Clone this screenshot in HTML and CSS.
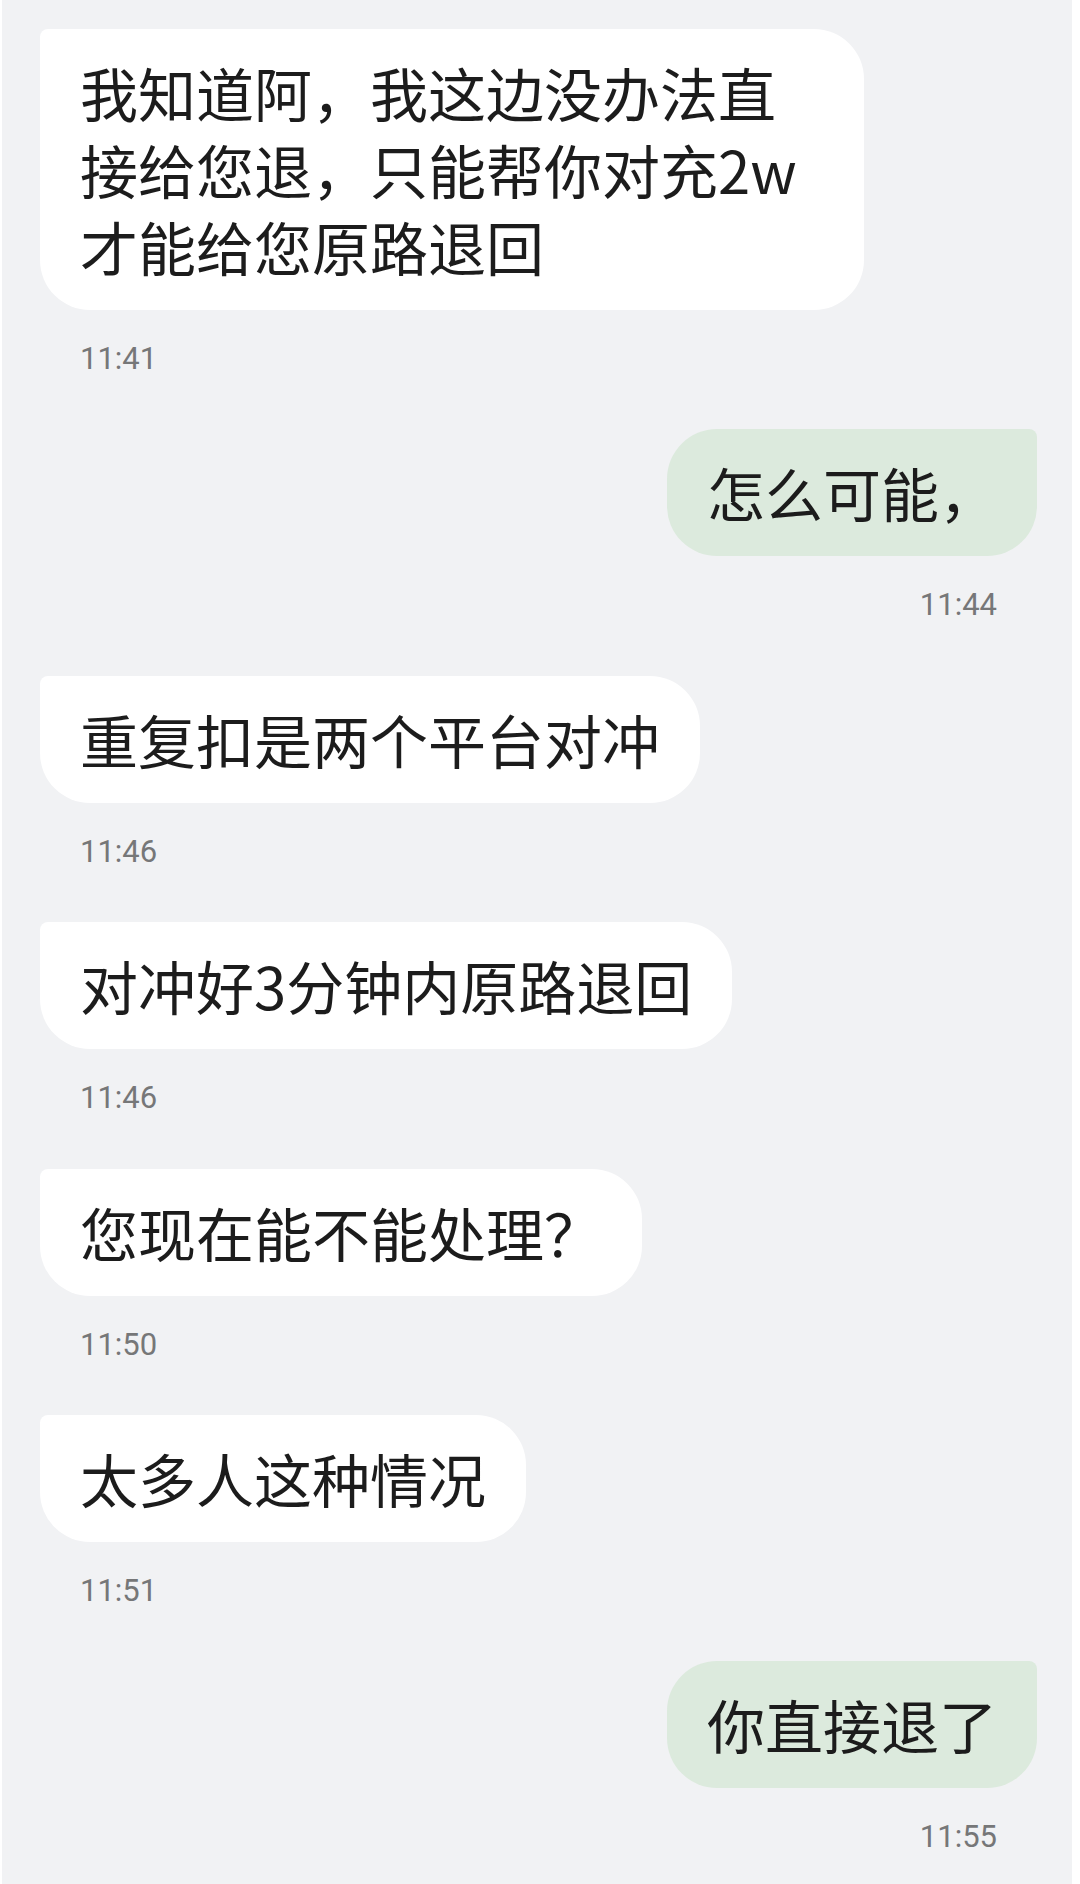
FILE: index.html
```html
<!DOCTYPE html>
<html lang="zh-CN">
<head>
<meta charset="utf-8">
<title>聊天记录</title>
<link rel="stylesheet" href="styles.css">
</head>
<body>
<div class="chat">
  <div class="msg in">
    <div class="bubble">我知道阿，我这边没办法直接给您退，只能帮你对充2w<br>才能给您原路退回</div>
    <div class="time">11:41</div>
  </div>
  <div class="msg out">
    <div class="bubble">怎么可能，</div>
    <div class="time">11:44</div>
  </div>
  <div class="msg in">
    <div class="bubble">重复扣是两个平台对冲</div>
    <div class="time">11:46</div>
  </div>
  <div class="msg in">
    <div class="bubble">对冲好3分钟内原路退回</div>
    <div class="time">11:46</div>
  </div>
  <div class="msg in">
    <div class="bubble">您现在能不能处理？</div>
    <div class="time">11:50</div>
  </div>
  <div class="msg in">
    <div class="bubble">太多人这种情况</div>
    <div class="time">11:51</div>
  </div>
  <div class="msg out">
    <div class="bubble">你直接退了</div>
    <div class="time">11:55</div>
  </div>
</div>
</body>
</html>
```

FILE: styles.css
```css
html, body {
  margin: 0;
  padding: 0;
  background: #ffffff;
}

.chat {
  margin: 0 8px 0 2px;
  min-height: 1884px;
  box-sizing: border-box;
  background: #f1f2f4;
  padding: 29px 35px 20px 38px;
  display: flex;
  flex-direction: column;
}

.msg {
  display: flex;
  flex-direction: column;
  margin-bottom: 50.4px;
}

.msg.in {
  align-items: flex-start;
}

.msg.out {
  align-items: flex-end;
}

.bubble {
  box-sizing: border-box;
  max-width: 824px;
  padding: 25px 40px;
  font-family: "Noto Sans CJK SC", "Noto Sans", sans-serif;
  font-size: 58px;
  line-height: 77px;
  color: #1c1c1c;
  background: #ffffff;
  border-radius: 8px 50px 50px 50px;
}

.msg.out .bubble {
  background: #dceadd;
  border-radius: 50px 8px 50px 50px;
}

.time {
  margin-top: 29px;
  padding: 0 40px;
  font-family: Roboto, "Liberation Sans", sans-serif;
  font-size: 31px;
  line-height: 40px;
  color: #767778;
}
```
